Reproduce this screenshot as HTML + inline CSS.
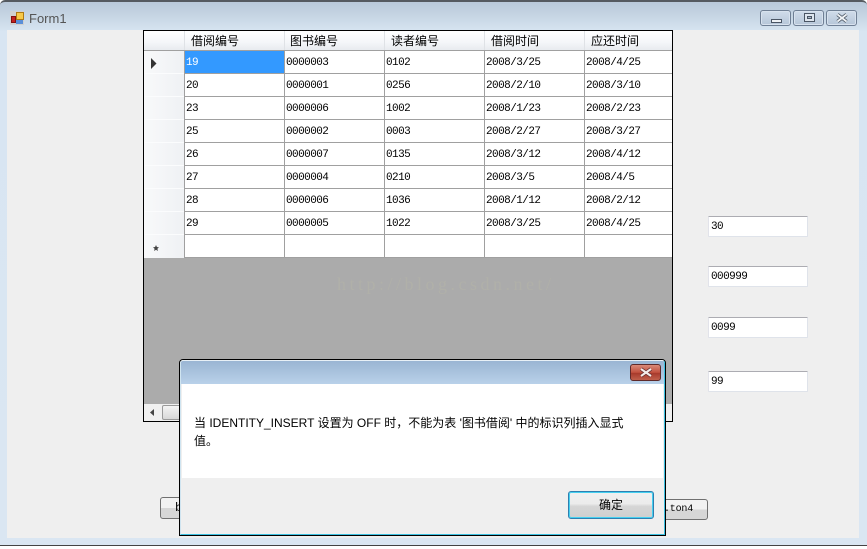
<!DOCTYPE html>
<html><head><meta charset="utf-8">
<style>
html,body{margin:0;padding:0;width:867px;height:549px;overflow:hidden;background:#fff}
div,span{position:absolute;box-sizing:border-box}
#win{left:0;top:0;width:867px;height:546px;background:linear-gradient(#b9c9da 0,#c4d3e2 12px,#d8e5f2 30px,#dae6f2 100%);border-top:2px solid #555a60;border-bottom:1px solid #444;border-radius:5px 5px 0 0}
#client{left:7px;top:30px;width:852px;height:508px;background:#efefef}
.t{font:12px/14px "Liberation Mono","WenQuanYi Zen Hei",monospace;color:#000;white-space:pre}
.c{font:11px/12px "Liberation Mono",monospace;letter-spacing:-.55px;margin-top:1px;color:#000;white-space:pre}
.h{font:12px/14px "WenQuanYi Zen Hei","Noto Sans CJK SC",sans-serif;color:#000;white-space:pre;top:34px}
.v{background:#a0a0a0;width:1px}
.r{background:#a0a0a0;height:1px}
.w{background:#fbfcfd;height:1px;left:145px;width:39px}
.tb{left:708px;width:100px;height:21px;background:#fff;border:1px solid #dfe3ea;border-top-color:#acacb2;border-left-color:#e2e3ea;border-radius:1px}
.tb span{left:2px;top:3px}
.wb{top:10px;height:16px;border:1px solid #6f7f94;border-radius:3px;background:linear-gradient(#d0dcea,#b6c6d8);box-shadow:inset 0 0 0 1px #d8e2ee}
</style></head><body>
<div id="win"></div>
<div style="left:10px;top:11px;width:14px;height:14px;background:#d0d0d0"></div>
<div style="left:16px;top:12px;width:8px;height:8px;background:#f7c948;border:1px solid #b07a10"></div>
<div style="left:11px;top:16px;width:5px;height:7px;background:#c32020;border:1px solid #801010"></div>
<div style="left:16px;top:20px;width:7px;height:4px;background:#5a8fd8"></div>
<div style="left:29px;top:11px;font:13px/16px 'Liberation Sans',sans-serif;color:#555;white-space:pre">Form1</div>
<div class="wb" style="left:760px;width:31px"><span style="left:10px;top:8px;width:11px;height:4px;background:#eef1f5;border:1px solid #4a5564"></span></div>
<div class="wb" style="left:793px;width:31px"><span style="left:10px;top:2px;width:11px;height:9px;background:#dde5ee;border:1px solid #4a5564"></span><span style="left:13px;top:5px;width:5px;height:3px;background:#aab8c8;border:1px solid #4a5564"></span></div>
<div class="wb" style="left:826px;width:31px"><svg style="position:absolute;left:9px;top:2px" width="12" height="10"><path d="M1.5 1.5L10.5 8.5M10.5 1.5L1.5 8.5" stroke="#4a5564" stroke-width="3.4"/><path d="M1.5 1.5L10.5 8.5M10.5 1.5L1.5 8.5" stroke="#f0f3f6" stroke-width="1.8"/></svg></div>
<div id="client"></div>

<!-- bottom buttons -->
<div style="left:160px;top:497px;width:40px;height:22px;border:1px solid #707070;border-radius:3px;background:linear-gradient(#f2f2f2 50%,#d6d6d6 50%)"><span class="t" style="left:14px;top:3px">b</span></div>
<div style="left:640px;top:499px;width:68px;height:21px;border:1px solid #707070;border-radius:3px;background:linear-gradient(#f2f2f2 50%,#d6d6d6 50%)"><span style="left:23px;top:4px;font:10px/12px 'Liberation Mono',monospace;letter-spacing:-.2px;color:#000;white-space:pre">.ton4</span></div>

<!-- grid -->
<div style="left:143px;top:30px;width:530px;height:392px;background:#ababab;border:1px solid #000"></div>
<div style="left:144px;top:31px;width:528px;height:19px;background:linear-gradient(#fff,#f4f6f9 60%,#e8ebef)"></div>
<div style="left:144px;top:50px;width:40px;height:208px;background:linear-gradient(90deg,#f8f9fa,#eff1f4)"></div>
<div style="left:184px;top:50px;width:488px;height:207px;background:#fff"></div>
<div style="left:185px;top:51px;width:99px;height:22px;background:#3399ff"></div>

<div class="r" style="left:144px;top:50px;width:528px"></div>
<div class="r" style="left:184px;top:73px;width:488px"></div>
<div class="r" style="left:184px;top:96px;width:488px"></div>
<div class="r" style="left:184px;top:119px;width:488px"></div>
<div class="r" style="left:184px;top:142px;width:488px"></div>
<div class="r" style="left:184px;top:165px;width:488px"></div>
<div class="r" style="left:184px;top:188px;width:488px"></div>
<div class="r" style="left:184px;top:211px;width:488px"></div>
<div class="r" style="left:184px;top:234px;width:488px"></div>
<div class="r" style="left:184px;top:257px;width:488px"></div>
<div class="w" style="top:73px"></div><div class="w" style="top:96px"></div><div class="w" style="top:119px"></div><div class="w" style="top:142px"></div><div class="w" style="top:165px"></div><div class="w" style="top:188px"></div><div class="w" style="top:211px"></div><div class="w" style="top:234px"></div>
<div class="v" style="left:184px;top:50px;height:208px"></div>
<div class="v" style="left:284px;top:50px;height:207px"></div>
<div class="v" style="left:384px;top:50px;height:207px"></div>
<div class="v" style="left:484px;top:50px;height:207px"></div>
<div class="v" style="left:584px;top:50px;height:207px"></div>
<div style="left:184px;top:31px;width:1px;height:19px;background:#dfe2e6"></div>
<div style="left:284px;top:31px;width:1px;height:19px;background:#dfe2e6"></div>
<div style="left:384px;top:31px;width:1px;height:19px;background:#dfe2e6"></div>
<div style="left:484px;top:31px;width:1px;height:19px;background:#dfe2e6"></div>
<div style="left:584px;top:31px;width:1px;height:19px;background:#dfe2e6"></div>

<div class="h" style="left:191px">借阅编号</div>
<div class="h" style="left:290px">图书编号</div>
<div class="h" style="left:391px">读者编号</div>
<div class="h" style="left:491px">借阅时间</div>
<div class="h" style="left:591px">应还时间</div>

<svg style="position:absolute;left:151px;top:58px" width="8" height="12"><path d="M0 0L5.5 5.5L0 11Z" fill="#333"/></svg>
<svg style="position:absolute;left:153px;top:245px" width="6" height="6"><path d="M3 0L3.9 2L6 2.4L4.4 3.7L4.9 6L3 4.8L1.1 6L1.6 3.7L0 2.4L2.1 2Z" fill="#444"/></svg>

<div class="c" style="left:186px;top:56px;color:#fff">19</div>
<div class="c" style="left:286px;top:56px">0000003</div><div class="c" style="left:386px;top:56px">0102</div><div class="c" style="left:486px;top:56px">2008/3/25</div><div class="c" style="left:586px;top:56px">2008/4/25</div>
<div class="c" style="left:186px;top:79px">20</div><div class="c" style="left:286px;top:79px">0000001</div><div class="c" style="left:386px;top:79px">0256</div><div class="c" style="left:486px;top:79px">2008/2/10</div><div class="c" style="left:586px;top:79px">2008/3/10</div>
<div class="c" style="left:186px;top:102px">23</div><div class="c" style="left:286px;top:102px">0000006</div><div class="c" style="left:386px;top:102px">1002</div><div class="c" style="left:486px;top:102px">2008/1/23</div><div class="c" style="left:586px;top:102px">2008/2/23</div>
<div class="c" style="left:186px;top:125px">25</div><div class="c" style="left:286px;top:125px">0000002</div><div class="c" style="left:386px;top:125px">0003</div><div class="c" style="left:486px;top:125px">2008/2/27</div><div class="c" style="left:586px;top:125px">2008/3/27</div>
<div class="c" style="left:186px;top:148px">26</div><div class="c" style="left:286px;top:148px">0000007</div><div class="c" style="left:386px;top:148px">0135</div><div class="c" style="left:486px;top:148px">2008/3/12</div><div class="c" style="left:586px;top:148px">2008/4/12</div>
<div class="c" style="left:186px;top:171px">27</div><div class="c" style="left:286px;top:171px">0000004</div><div class="c" style="left:386px;top:171px">0210</div><div class="c" style="left:486px;top:171px">2008/3/5</div><div class="c" style="left:586px;top:171px">2008/4/5</div>
<div class="c" style="left:186px;top:194px">28</div><div class="c" style="left:286px;top:194px">0000006</div><div class="c" style="left:386px;top:194px">1036</div><div class="c" style="left:486px;top:194px">2008/1/12</div><div class="c" style="left:586px;top:194px">2008/2/12</div>
<div class="c" style="left:186px;top:217px">29</div><div class="c" style="left:286px;top:217px">0000005</div><div class="c" style="left:386px;top:217px">1022</div><div class="c" style="left:486px;top:217px">2008/3/25</div><div class="c" style="left:586px;top:217px">2008/4/25</div>

<div style="left:337px;top:274px;font:18px/20px 'Liberation Serif',serif;letter-spacing:3.5px;color:#b0b0a9;white-space:pre">http://blog.csdn.net/</div>

<!-- scrollbar -->
<div style="left:144px;top:404px;width:528px;height:17px;background:#f0f0f0"></div>
<div style="left:162px;top:405px;width:20px;height:15px;background:linear-gradient(#f4f4f4,#d8d8d8);border:1px solid #9a9a9a;border-radius:2px"></div>
<svg style="position:absolute;left:150px;top:409px" width="4" height="7"><path d="M4 0L0 3.5L4 7Z" fill="#444"/></svg>

<!-- text boxes -->
<div class="tb" style="top:216px"><span class="c">30</span></div>
<div class="tb" style="top:266px"><span class="c">000999</span></div>
<div class="tb" style="top:317px"><span class="c">0099</span></div>
<div class="tb" style="top:371px"><span class="c">99</span></div>

<!-- dialog -->
<div style="left:179px;top:359px;width:487px;height:177px;background:#efefef;border:1px solid #000;border-radius:4px 4px 0 0"></div>
<div style="left:180px;top:360px;width:485px;height:175px;border:1px solid #3cc0e0;border-top-color:#e8f0f6;border-left-color:#cfe4f0;border-radius:3px 3px 0 0"></div>
<div style="left:181px;top:361px;width:483px;height:23px;background:linear-gradient(#9ab5d3,#b9d1e9);border-radius:2px 2px 0 0"></div>
<div style="left:182px;top:384px;width:481px;height:94px;background:#fff"></div>
<div style="left:630px;top:364px;width:31px;height:17px;border:1px solid #5e2a2a;border-radius:3px;background:linear-gradient(#d98a78 0,#c2503e 50%,#a83a2c 55%,#c0604c 100%)"><svg style="position:absolute;left:8px;top:2px" width="14" height="11"><path d="M2 2L12 9M12 2L2 9" stroke="#6a3030" stroke-width="3.6"/><path d="M2 2L12 9M12 2L2 9" stroke="#f4ecea" stroke-width="2"/></svg></div>
<div style="left:194px;top:414px;font:12px/18px 'Liberation Sans','Noto Sans CJK SC',sans-serif;color:#000;white-space:pre">当 IDENTITY_INSERT 设置为 OFF 时，不能为表 '图书借阅' 中的标识列插入显式
值。</div>
<div style="left:568px;top:491px;width:86px;height:28px;border:1px solid #2f7fb0;border-radius:3px;background:linear-gradient(#f0f0f0 0,#ececec 45%,#d6d6d6 55%,#cfcfcf 100%);box-shadow:inset 0 0 0 1px #45d0f0"><span style="left:30px;top:5px;font:12px/16px 'Noto Sans CJK SC',sans-serif;color:#000;white-space:pre">确定</span></div>
</body></html>
